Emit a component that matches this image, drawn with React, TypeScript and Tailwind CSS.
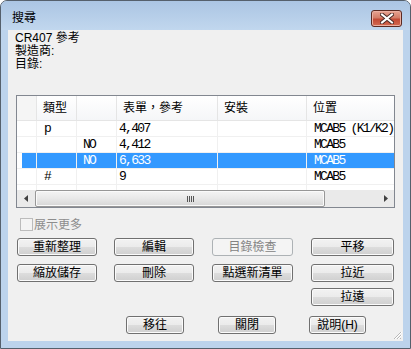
import React from 'react';

const sans = "font-['Liberation_Sans','Noto_Sans_CJK_TC',sans-serif]";
const mono = "font-['Liberation_Mono','Noto_Sans_CJK_TC',monospace]";

const cols = [20, 40, 40, 101, 89, 87];

type Row = { cells: string[]; selected?: boolean };

const rows: Row[] = [
  { cells: ['', 'p', '', '4,407', '', 'MCAB5 (K1/K2)'] },
  { cells: ['', '', 'NO', '4,412', '', 'MCAB5'] },
  { cells: ['', '', 'NO', '6,633', '', 'MCAB5'], selected: true },
  { cells: ['', '#', '', '9', '', 'MCAB5'] },
];

const padL = [0, 7, 6, 2, 6, 7];

function Btn({ label, w, ml = 0, disabled = false }: { label: string; w: number; ml?: number; disabled?: boolean }) {
  return (
    <div
      style={{ width: w, marginLeft: ml }}
      className={
        'h-[18px] shrink-0 flex items-center justify-center rounded-[3px] text-[12px] leading-none ' +
        (disabled
          ? 'border border-[#adb2b5] bg-[#f4f4f4] text-[#838383]'
          : 'border border-[#707070] bg-[linear-gradient(#f2f2f2,#ebebeb_50%,#dddddd_50%,#cfcfcf)] shadow-[inset_0_0_0_1px_#fbfbfb] text-black')
      }
    >
      {label}
    </div>
  );
}

function Arrow({ dir }: { dir: 'l' | 'r' }) {
  return (
    <svg width="4" height="7" viewBox="0 0 4 7">
      {dir === 'l' ? <polygon points="4,0 4,7 0,3.5" fill="#404040" /> : <polygon points="0,0 0,7 4,3.5" fill="#404040" />}
    </svg>
  );
}

export default function App() {
  return (
    <div className={`w-[411px] h-[349px] flex flex-col bg-[#bcd3ec] border border-[#55606c] rounded-t-[7px] overflow-hidden text-black ${sans}`}>
      {/* title bar */}
      <div className="h-[29px] shrink-0 flex items-start justify-between bg-gradient-to-b from-[#abc5e3] to-[#c1d7ee]">
        <span className="ml-[11px] mt-[11px] text-[12px] leading-[13px]">搜尋</span>
        <div className="mt-[9px] mr-[8px] w-[31px] h-[17px] rounded-[3px] border border-[#5b2a22] bg-[linear-gradient(#e8a493,#d37d68_45%,#c24a35_55%,#d46b52)] shadow-[inset_0_0_0_1px_#eab0a2] flex items-center justify-center">
          <svg width="14" height="11" viewBox="0 0 14 11">
            <path d="M2 1.5 L12 9.5 M12 1.5 L2 9.5" stroke="#4a2a26" strokeWidth="4" strokeLinecap="square" />
            <path d="M2 1.5 L12 9.5 M12 1.5 L2 9.5" stroke="#ffffff" strokeWidth="2" strokeLinecap="square" />
          </svg>
        </div>
      </div>

      <div className="h-[311px] shrink-0 flex px-[7px]">
        <div className="relative w-[395px] h-full bg-[#f0f0f0] flex flex-col">
          <div className="h-[65px] pl-[7px] pt-[2px] text-[12px] leading-[12px]">
            <div>CR407 參考</div>
            <div className="mt-[1px]">製造商:</div>
            <div className="mt-[1px]">目錄:</div>
          </div>

          {/* list view */}
          <div className="ml-[8px] w-[379px] h-[113px] border border-[#828790] bg-white flex flex-col overflow-hidden">
            <div className="h-[25px] shrink-0 flex bg-gradient-to-b from-white to-[#f5f6f8] border-b border-[#e5e5e5] text-[12px]">
              {['', '類型', '', '表單，參考', '安裝', '位置'].map((h, i) => (
                <div
                  key={i}
                  style={{ width: cols[i] }}
                  className={'shrink-0 flex items-center pl-[6px] ' + (i < 5 ? 'border-r border-[#e5e5e5]' : '') + (i === 0 ? ' bg-[#f5f5f5]' : '')}
                >
                  {h}
                </div>
              ))}
            </div>
            {rows.map((r, ri) => (
              <div key={ri} className={`h-4 shrink-0 flex text-[13px] tracking-[-1.7px] ${mono}`}>
                {r.cells.map((c, i) => (
                  <div
                    key={i}
                    style={{ width: cols[i], paddingLeft: padL[i] }}
                    className={
                      'shrink-0 flex items-center whitespace-nowrap overflow-hidden border-b border-[#f0f0f0] ' +
                      (i < 5 ? 'border-r ' : '') +
                      (r.selected && i > 0 ? 'bg-[#3399ff] text-white' : '')
                    }
                  >
                    {i === 0 && r.selected ? <div className="ml-[5px] w-[14px] h-full bg-[#3399ff]" /> : c}
                  </div>
                ))}
              </div>
            ))}
            <div className="flex-1 flex">
              {cols.map((w, i) => (
                <div key={i} style={{ width: w }} className={'shrink-0 ' + (i < 5 ? 'border-r border-[#f0f0f0]' : '')} />
              ))}
            </div>
            {/* horizontal scrollbar */}
            <div className="h-[17px] shrink-0 flex bg-[#eaeaea]">
              <div className="w-[18px] flex items-center justify-center">
                <Arrow dir="l" />
              </div>
              <div className="w-[290px] h-full rounded-[2px] border border-[#979797] bg-gradient-to-b from-[#f4f4f4] via-[#e8e8e8] to-[#d6d6d6] shadow-[inset_0_0_0_1px_#fafafa] flex items-center justify-center">
                <div className="flex gap-[1px] pl-[20px]">
                  <div className="w-[1px] h-[6px] bg-[#555]" />
                  <div className="w-[1px] h-[6px] bg-[#555]" />
                  <div className="w-[1px] h-[6px] bg-[#555]" />
                  <div className="w-[1px] h-[6px] bg-[#555]" />
                </div>
              </div>
              <div className="flex-1" />
              <div className="w-[17px] flex items-center justify-center">
                <Arrow dir="r" />
              </div>
            </div>
          </div>

          <div className="mt-[10px] h-[13px] flex items-center">
            <div className="ml-[12px] w-[13px] h-[13px] border border-[#bcbcbc] bg-[#f4f4f4]" />
            <span className="ml-[1px] text-[12px] leading-none text-[#8d8d8d]">展示更多</span>
          </div>

          <div className="mt-[7px] flex">
            <Btn label="重新整理" w={80} ml={9} />
            <Btn label="編輯" w={80} ml={17} />
            <Btn label="目錄檢查" w={81} ml={18} disabled />
            <Btn label="平移" w={83} ml={18} />
          </div>
          <div className="mt-[8px] flex">
            <Btn label="縮放儲存" w={80} ml={9} />
            <Btn label="刪除" w={80} ml={17} />
            <Btn label="點選新清單" w={81} ml={18} />
            <Btn label="拉近" w={83} ml={18} />
          </div>
          <div className="mt-[6px] flex">
            <Btn label="拉遠" w={83} ml={303} />
          </div>
          <div className="mt-[10px] flex">
            <Btn label="移往" w={58} ml={118} />
            <Btn label="關閉" w={58} ml={34} />
            <Btn label="說明(H)" w={57} ml={33} />
          </div>

          <svg className="absolute right-[1px] bottom-[1px]" width="10" height="10" viewBox="0 0 10 10">
            <path d="M9 2 L2 9 M9 5 L5 9 M9 8 L8 9" stroke="#b8b8b8" strokeWidth="1" />
            <path d="M10 2 L3 9 M10 5 L6 9" stroke="#ffffff" strokeWidth="1" />
          </svg>
        </div>
      </div>
      <div className="flex-1" />
    </div>
  );
}
